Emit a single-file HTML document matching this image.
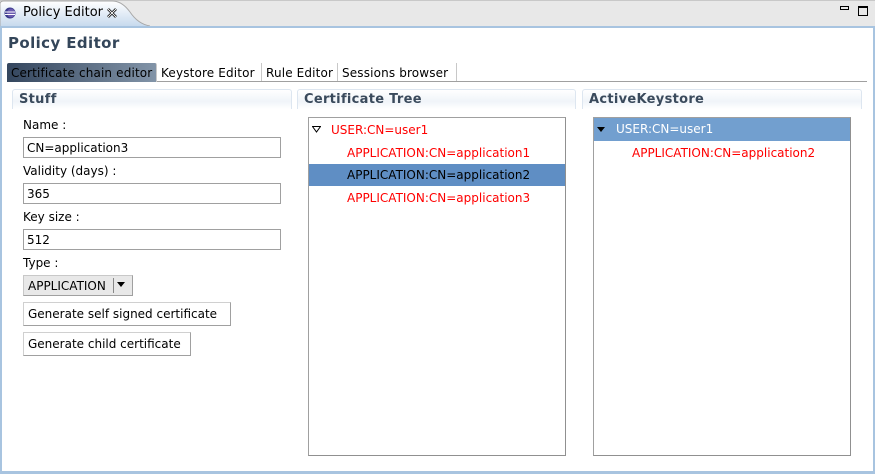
<!DOCTYPE html>
<html><head><style>
*{margin:0;padding:0;box-sizing:border-box}
body{width:875px;height:474px;overflow:hidden;background:#fff;font-family:"DejaVu Sans","Liberation Sans",sans-serif;font-size:12px;color:#000;position:relative;white-space:nowrap}
.a{position:absolute}
.inp{position:absolute;border:1px solid #a0a0a0;background:#fff;padding:1px 3px;height:21px;line-height:18px}
.btn{position:absolute;background:#fff;border:1px solid #d0d0d0;border-right-color:#a0a0a0;border-bottom-color:#a0a0a0;line-height:22px;padding-left:4px}
.sec{position:absolute;top:89px;height:20px;border:1px solid #dde6f0;border-bottom:none;border-radius:3px 3px 0 0;background:linear-gradient(#fff,#f0f4f9 60%,#fff);font-weight:bold;font-size:13px;color:#3a4a5c;padding:2px 0 0 6px;letter-spacing:.3px}
.tree{position:absolute;top:117px;height:339px;border:1px solid #a0a0a0;border-right-color:#909090;border-bottom-color:#909090;background:#fff}
.row{position:absolute;left:0;right:0;height:22px;line-height:22px;color:#f00}
.tri{position:absolute;width:0;height:0;border-left:4px solid transparent;border-right:4px solid transparent;border-top:5px solid #000}
.tab{position:absolute;top:63px;height:19px;line-height:20px;padding:0 4px;border-right:1px solid #c8c8c8;font-size:12px;letter-spacing:.15px;white-space:nowrap;overflow:hidden}
</style></head><body>
<div class="a" style="left:0;top:0;width:875px;height:28px;background:#e8e8e8;border-top:1px solid #c8c8c8"></div>
<svg class="a" style="left:0;top:0" width="150" height="28"><defs><linearGradient id="g" x1="0" y1="0" x2="0" y2="1"><stop offset="0" stop-color="#fff"/><stop offset="1" stop-color="#c3d7ec"/></linearGradient></defs><path d="M0,28 L0,4 Q0,1 4,1 L112,1 Q122,1 130,12 Q138,24 150,26 L150,28 Z" fill="url(#g)" stroke="#a8a8a8" stroke-width="1"/></svg>
<svg class="a" style="left:4px;top:7px" width="12" height="12"><circle cx="6" cy="6" r="5.5" fill="#3a3a8c"/><ellipse cx="7" cy="6" rx="4" ry="4.5" fill="#6a5ab0"/><line x1="1" y1="5" x2="11" y2="5" stroke="#fff" stroke-width="1"/><line x1="1" y1="7.5" x2="11" y2="7.5" stroke="#fff" stroke-width="1"/></svg>
<div class="a" style="left:23px;top:5px;font-size:13px">Policy Editor</div>
<svg class="a" style="left:107px;top:8px" width="10" height="10"><path d="M1,1 L9,9 M9,1 L1,9" stroke="#000" stroke-width="2.6"/><path d="M1,1 L9,9 M9,1 L1,9" stroke="#fff" stroke-width="0.9"/></svg>
<div class="a" style="left:840px;top:6px;width:9px;height:4px;border:1px solid #000"></div>
<div class="a" style="left:858px;top:6px;width:10px;height:10px;border:1px solid #000;border-top-width:2px"></div>
<div class="a" style="left:0;top:26px;width:875px;height:448px;border:2px solid #a8c4e0;border-bottom-width:3px;background:transparent"></div>
<div class="a" style="left:8px;top:34px;font-weight:bold;font-size:15px;color:#34465a;letter-spacing:.4px">Policy Editor</div>
<div class="tab" style="left:7px;width:150px;background:linear-gradient(90deg,#34465e,#8294a8);color:#000;border-radius:2px 2px 0 0;padding-left:4px">Certificate chain editor</div>
<div class="tab" style="left:157px;width:105px">Keystore Editor</div>
<div class="tab" style="left:262px;width:76px">Rule Editor</div>
<div class="tab" style="left:338px;width:119px">Sessions browser</div>
<div class="a" style="left:157px;top:81px;width:710px;height:1px;background:#a0a0a0"></div>
<div class="sec" style="left:12px;width:280px">Stuff</div>
<div class="sec" style="left:297px;width:279px">Certificate Tree</div>
<div class="sec" style="left:582px;width:280px">ActiveKeystore</div>
<div class="a" style="left:23px;top:118px">Name :</div>
<div class="inp" style="left:23px;top:137px;width:258px">CN=application3</div>
<div class="a" style="left:23px;top:164px">Validity (days) :</div>
<div class="inp" style="left:23px;top:183px;width:258px">365</div>
<div class="a" style="left:23px;top:210px">Key size :</div>
<div class="inp" style="left:23px;top:229px;width:258px">512</div>
<div class="a" style="left:23px;top:256px">Type :</div>
<div class="a" style="left:23px;top:275px;width:110px;height:21px;background:#e8e8e8;border:1px solid #c8c8c8;border-right-color:#a0a0a0;border-bottom-color:#a0a0a0;line-height:20px;padding-left:4px">APPLICATION</div>
<div class="a" style="left:113px;top:278px;width:1px;height:15px;background:#888"></div>
<div class="tri" style="left:117px;top:282px"></div>
<div class="btn" style="left:23px;top:302px;width:208px;height:24px">Generate self signed certificate</div>
<div class="btn" style="left:23px;top:332px;width:168px;height:24px">Generate child certificate</div>
<div class="tree" style="left:308px;width:258px">
<svg class="a" style="left:3px;top:8px" width="9" height="7"><path d="M0.5,0.5 L8.5,0.5 L4.5,6 Z" fill="#fff" stroke="#000"/></svg>
<div class="row" style="top:1px;padding-left:22px">USER:CN=user1</div>
<div class="row" style="top:24px;padding-left:38px">APPLICATION:CN=application1</div>
<div class="row" style="top:46px;padding-left:38px;background:#5f8ec4;color:#000">APPLICATION:CN=application2</div>
<div class="row" style="top:69px;padding-left:38px">APPLICATION:CN=application3</div>
</div>
<div class="tree" style="left:593px;width:258px">
<div class="row" style="top:0;padding-left:22px;background:#729fcf;color:#fff;height:23px">USER:CN=user1</div>
<div class="tri" style="left:3px;top:9px"></div>
<div class="row" style="top:24px;padding-left:38px">APPLICATION:CN=application2</div>
</div>
</body></html>
